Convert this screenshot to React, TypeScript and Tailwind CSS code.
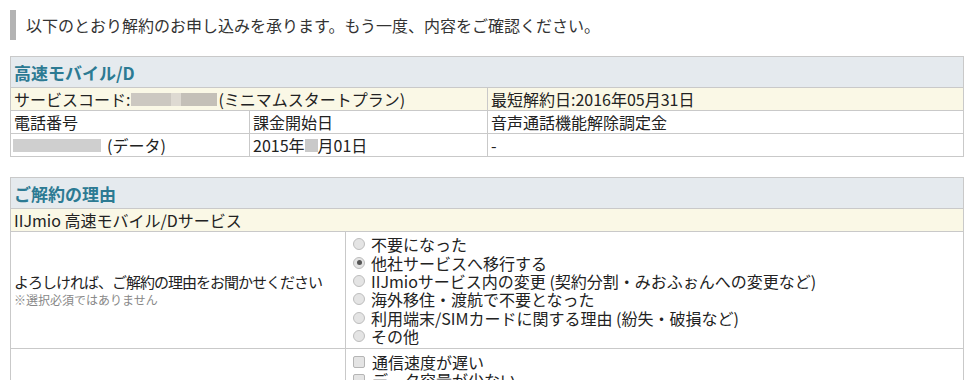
import React from 'react';

const jp = '[font-family:"Noto_Sans_CJK_JP","Liberation_Sans",sans-serif]';

function Radio({ checked }: { checked?: boolean }) {
  return (
    <span className="inline-flex items-center justify-center w-[12px] h-[12px] rounded-full border border-[#bdbdbd] bg-[#e4e4e4] mr-[6px] shrink-0">
      {checked && <span className="w-[5px] h-[5px] rounded-full bg-[#555]" />}
    </span>
  );
}

function Check() {
  return <span className="inline-block w-[12px] h-[12px] rounded-[2px] border border-[#b5b5b5] bg-[#e4e4e4] mr-[7px] shrink-0" />;
}

function Blur({ w, tone = 'bg-[#c9c9c9]' }: { w: string; tone?: string }) {
  return <span className={`inline-block h-[13px] ${w} ${tone}`} />;
}

const reasons = [
  '不要になった',
  '他社サービスへ移行する',
  'IIJmioサービス内の変更 (契約分割・みおふぉんへの変更など)',
  '海外移住・渡航で不要となった',
  '利用端末/SIMカードに関する理由 (紛失・破損など)',
  'その他',
];

export default function App() {
  return (
    <div className={`w-[969px] h-[380px] overflow-hidden bg-white text-[#222] ${jp}`}>
      <div className="flex items-center pt-[10px] pl-[10px]">
        <div className="w-[6px] h-[30px] bg-[#b3b3b3]" />
        <p className="ml-[10px] text-[16px] leading-[30px] text-[#333]">
          以下のとおり解約のお申し込みを承ります。もう一度、内容をご確認ください。
        </p>
      </div>

      <div className="mt-[16px] ml-[10px] w-[954px] border border-[#c9c9c9] text-[16px]">
        <div className="h-[31px] bg-[#e5eaee] border-b border-[#c9c9c9] px-[3px] text-[17px] font-bold text-[#2c7a93] leading-[31px]">
          高速モバイル/D
        </div>
        <div className="grid grid-cols-[476px_1fr] bg-[#faf8e6] border-b border-[#c9c9c9] leading-[22px]">
          <div className="px-[3px] flex items-center">
            サービスコード:
            <span className="flex items-center ml-[1px] mr-[1px]">
              <Blur w="w-[40px]" tone="bg-[#ccc8c1]" />
              <Blur w="w-[10px]" tone="bg-[#dedad2]" />
              <Blur w="w-[36px]" tone="bg-[#c4c0b8]" />
            </span>
            (ミニマムスタートプラン)
          </div>
          <div className="px-[3px] border-l border-[#c9c9c9]">最短解約日:2016年05月31日</div>
        </div>
        <div className="grid grid-cols-[238px_238px_1fr] border-b border-[#c9c9c9] leading-[22px]">
          <div className="px-[3px]">電話番号</div>
          <div className="px-[3px] border-l border-[#c9c9c9]">課金開始日</div>
          <div className="px-[3px] border-l border-[#c9c9c9]">音声通話機能解除調定金</div>
        </div>
        <div className="grid grid-cols-[238px_238px_1fr] leading-[22px]">
          <div className="px-[2px] flex items-center">
            <Blur w="w-[88px]" tone="bg-[#cfcfcf]" />
            <span className="ml-[6px]">(データ)</span>
          </div>
          <div className="px-[3px] border-l border-[#c9c9c9] flex items-center">
            2015年<Blur w="w-[13px]" />月01日
          </div>
          <div className="px-[3px] border-l border-[#c9c9c9]">-</div>
        </div>
      </div>

      <div className="mt-[20px] ml-[10px] w-[954px] border border-[#c9c9c9] border-b-0 text-[16px]">
        <div className="h-[31px] bg-[#e5eaee] border-b border-[#c9c9c9] px-[3px] text-[17px] font-bold text-[#2c7a93] leading-[31px]">
          ご解約の理由
        </div>
        <div className="h-[23px] bg-[#faf8e6] border-b border-[#c9c9c9] px-[3px] leading-[22px]">
          IIJmio 高速モバイル/Dサービス
        </div>
        <div className="grid grid-cols-[334px_1fr] border-b border-[#c9c9c9]">
          <div className="px-[3px] flex flex-col justify-center">
            <span className="text-[15px] tracking-[-1px] whitespace-nowrap leading-[20px]">
              よろしければ、ご解約の理由をお聞かせください
            </span>
            <span className="text-[12px] leading-[16px] text-[#888]">※選択必須ではありません</span>
          </div>
          <div className="border-l border-[#c9c9c9] pl-[7px] py-[3px]">
            {reasons.map((r, i) => (
              <div key={r} className="flex items-center h-[18.4px] leading-[18px] whitespace-nowrap">
                <Radio checked={i === 1} />
                <span>{r}</span>
              </div>
            ))}
          </div>
        </div>
        <div className="grid grid-cols-[334px_1fr]">
          <div />
          <div className="border-l border-[#c9c9c9] pl-[7px] py-[3px]">
            <div className="flex items-center h-[18.4px] leading-[18px]">
              <Check />
              <span>通信速度が遅い</span>
            </div>
            <div className="flex items-center h-[18.4px] leading-[18px]">
              <Check />
              <span>データ容量が少ない</span>
            </div>
          </div>
        </div>
      </div>
    </div>
  );
}
